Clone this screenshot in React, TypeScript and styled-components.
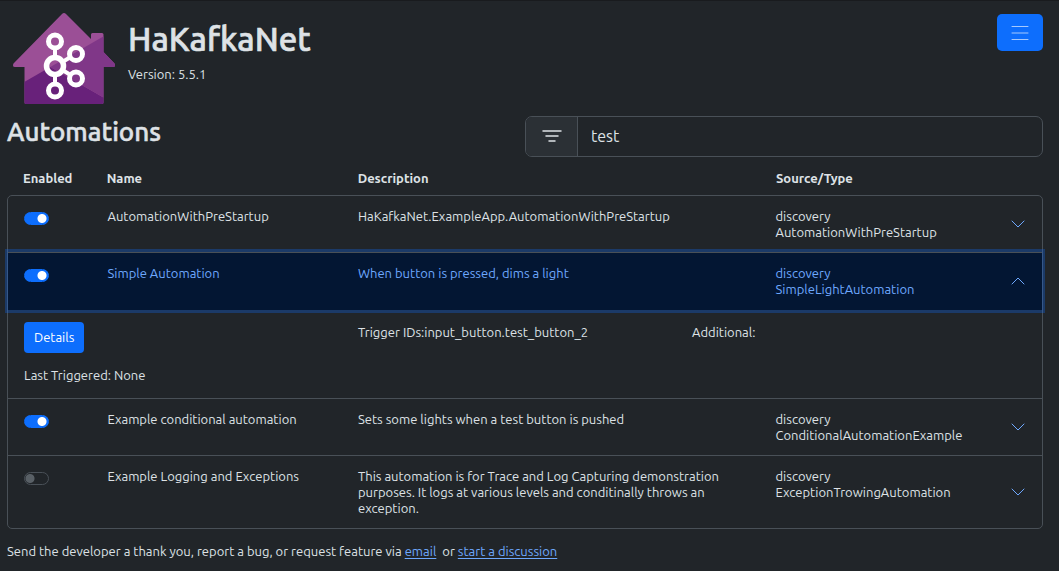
import { useState } from "react";
import styled, { createGlobalStyle, css } from "styled-components";

const GlobalStyle = createGlobalStyle`
  *, *::before, *::after { box-sizing: border-box; }
  body {
    margin: 0;
    background: #212529;
    color: #dee2e6;
    font-family: Ubuntu, "Noto Sans", sans-serif;
    font-size: 13px;
    line-height: 16px;
  }
  button, input { font: inherit; }
`;

const Page = styled.div`
  padding: 11px 16px 10px 7px;
  border-top: 1px solid #191b1e;
`;

const Header = styled.header`
  display: flex;
  align-items: flex-start;
  padding-left: 6px;
`;

const Logo = styled.svg`
  display: block;
  width: 102px;
  height: 92px;
  flex: none;
`;

const Brand = styled.div`
  flex: 1;
  padding: 8px 0 0 13px;
`;

const heading = css`
  font-family: Ubuntu, "Noto Sans", sans-serif;
  font-weight: 500;
  -webkit-text-stroke: 0.02em currentColor;
`;

const Title = styled.h1`
  ${heading}
  margin: 0 0 8px;
  font-size: 33px;
  line-height: 38px;
`;

const Version = styled.p`
  margin: 0;
`;

const MenuButton = styled.button`
  display: flex;
  align-items: center;
  justify-content: center;
  width: 46px;
  height: 37px;
  margin-top: 2px;
  padding: 0;
  border: 0;
  border-radius: 5px;
  background: #0d6efd;
  color: #a6c9fe;
  cursor: pointer;
`;

const Toolbar = styled.div`
  display: grid;
  grid-template-columns: 1fr 1fr;
  margin-top: 12px;
`;

const SectionTitle = styled.h2`
  ${heading}
  margin: 0;
  font-size: 26px;
  line-height: 32px;
`;

const SearchGroup = styled.div`
  display: flex;
  height: 41px;
  border: 1px solid #495057;
  border-radius: 7px;
  overflow: hidden;
`;

const SearchLabel = styled.label`
  display: flex;
  align-items: center;
  justify-content: center;
  width: 52px;
  padding-bottom: 1px;
  border-right: 1px solid #495057;
  background: #2b3035;
  color: #dee2e6;
`;

const SearchInput = styled.input`
  flex: 1;
  min-width: 0;
  padding: 0 13px 2px;
  border: 0;
  outline: 0;
  background: transparent;
  color: #dee2e6;
  font-size: 16px;
`;

const Table = styled.table`
  display: block;
  margin-top: 13px;
`;

const Head = styled.thead`
  display: block;
  padding: 0 16px;
`;

const Body = styled.tbody`
  display: block;
  margin-top: 9px;
  border: 1px solid #495057;
  border-radius: 5px;
`;

const columns = css`
  display: grid;
  grid-template-columns: 1fr 3fr 5fr 3fr;
`;

const HeadRow = styled.tr`
  ${columns}
`;

const HeadCell = styled.th`
  padding: 0 20px 0 0;
  text-align: left;
  font-weight: 700;
`;

const Row = styled.tr<{ $open: boolean }>`
  ${columns}
  padding: 12px 16px;

  tr + & {
    border-top: 1px solid #495057;
  }

  ${({ $open }) =>
    $open &&
    css`
      position: relative;
      padding-bottom: 13px;
      background: #031633;
      color: #6ea8fe;
      box-shadow: 0 0 0 3px rgba(13, 110, 253, 0.3);
    `}
`;

const Cell = styled.td`
  padding: 0 20px 0 0;
`;

const SourceCell = styled.td`
  display: flex;
  justify-content: space-between;
  padding: 0 1px 0 0;
`;

const Line = styled.div``;

const Switch = styled.input`
  appearance: none;
  display: block;
  width: 25px;
  height: 13px;
  margin: 4px 0 0;
  border: 1px solid #495057;
  border-radius: 7px;
  background: radial-gradient(circle at 5px 50%, #596066 4px, transparent 5px);

  &:checked {
    border-color: #0d6efd;
    background: radial-gradient(circle at 17px 50%, #fff 4px, #0d6efd 5px);
  }
`;

const Toggle = styled.button`
  align-self: center;
  display: flex;
  padding: 0;
  border: 0;
  background: transparent;
  color: #6ea8fe;
  cursor: pointer;
`;

const DetailRow = styled.tr`
  display: block;
`;

const DetailCell = styled.td`
  display: grid;
  grid-template-columns: repeat(3, 1fr);
  row-gap: 14px;
  padding: 12px 16px 15px;
`;

const DetailText = styled.div`
  padding-top: 2px;
`;

const DetailsButton = styled.button`
  justify-self: start;
  height: 31px;
  padding: 0 10px 2px;
  border: 0;
  border-radius: 4px;
  background: #0d6efd;
  color: #fff;
  cursor: pointer;
`;

const Footer = styled.footer`
  margin-top: 14px;
`;

const Link = styled.a`
  color: #6ea8fe;
  text-underline-offset: 2px;
`;

const Chevron = ({ up }: { up: boolean }) => (
  <svg width="14" height="8" viewBox="0 0 14 8" fill="none" stroke="currentColor" strokeLinecap="round" strokeLinejoin="round">
    <path d={up ? "M1 7L7 1L13 7" : "M1 1L7 7L13 1"} />
  </svg>
);

const automations = [
  {
    name: "AutomationWithPreStartup",
    description: "HaKafkaNet.ExampleApp.AutomationWithPreStartup",
    source: "discovery",
    type: "AutomationWithPreStartup",
    enabled: true,
    trigger: "",
  },
  {
    name: "Simple Automation",
    description: "When button is pressed, dims a light",
    source: "discovery",
    type: "SimpleLightAutomation",
    enabled: true,
    trigger: "input_button.test_button_2",
  },
  {
    name: "Example conditional automation",
    description: "Sets some lights when a test button is pushed",
    source: "discovery",
    type: "ConditionalAutomationExample",
    enabled: true,
    trigger: "",
  },
  {
    name: "Example Logging and Exceptions",
    description:
      "This automation is for Trace and Log Capturing demonstration purposes. It logs at various levels and conditinally throws an exception.",
    source: "discovery",
    type: "ExceptionTrowingAutomation",
    enabled: false,
    trigger: "",
  },
];

type Automation = (typeof automations)[number];

function AutomationRows({ item, open, onToggle }: { item: Automation; open: boolean; onToggle: () => void }) {
  return (
    <>
      <Row $open={open}>
        <Cell>
          <Switch type="checkbox" role="switch" defaultChecked={item.enabled} aria-label={`Enable ${item.name}`} />
        </Cell>
        <Cell>{item.name}</Cell>
        <Cell>{item.description}</Cell>
        <SourceCell>
          <div>
            <Line>{item.source}</Line>
            <Line>{item.type}</Line>
          </div>
          <Toggle type="button" aria-expanded={open} aria-label={`Toggle ${item.name}`} onClick={onToggle}>
            <Chevron up={open} />
          </Toggle>
        </SourceCell>
      </Row>
      {open && (
        <DetailRow>
          <DetailCell colSpan={4}>
            <DetailsButton type="button">Details</DetailsButton>
            <DetailText>Trigger IDs:{item.trigger}</DetailText>
            <DetailText>Additional:</DetailText>
            <div>Last Triggered: None</div>
          </DetailCell>
        </DetailRow>
      )}
    </>
  );
}

export default function App() {
  const [openName, setOpenName] = useState("Simple Automation");

  return (
    <Page>
      <GlobalStyle />
      <Header>
        <Logo viewBox="13 12 102 92" aria-hidden="true">
          <defs>
            <clipPath id="house">
              <path d="M62 14Q64 12 66 14L91 39V34.500Q91 33 92.500 33H102Q103.500 33 103.500 34.500V52L114.500 63.500Q116 67 113 67H103.500V102.500Q103.500 104 102 104H26Q24.500 104 24.500 102.500V67H15Q12 67 13.500 63.500Z" />
            </clipPath>
          </defs>
          <g clipPath="url(#house)">
            <rect x="13" y="12" width="103" height="93" fill="#9b4f96" />
            <path d="M12 89L50.300 67L120 107V108H12Z" fill="#68217a" />
            <path d="M50.300 67L120 27V107Z" fill="#803788" />
          </g>
          <g fill="none" stroke="#fff">
            <path d="M55 50V56M55 76V82M64 61L69 58M64 71L69 74" strokeWidth="4" />
            <circle cx="55" cy="66" r="8.500" strokeWidth="5.500" />
            <g strokeWidth="5">
              <circle cx="55" cy="41.500" r="6.500" />
              <circle cx="55" cy="90.500" r="6.500" />
              <circle cx="76" cy="54" r="6.500" />
              <circle cx="76" cy="78.500" r="6.500" />
            </g>
          </g>
        </Logo>
        <Brand>
          <Title>HaKafkaNet</Title>
          <Version>Version: 5.5.1</Version>
        </Brand>
        <MenuButton type="button" aria-label="Menu">
          <svg width="18" height="16" viewBox="0 0 18 16" stroke="currentColor" strokeLinecap="round">
            <path d="M1 1.500H17M1 8H17M1 14.500H17" />
          </svg>
        </MenuButton>
      </Header>
      <main>
        <Toolbar>
          <SectionTitle>Automations</SectionTitle>
          <SearchGroup>
            <SearchLabel htmlFor="filter" aria-label="Filter automations">
              <svg width="20" height="14" viewBox="0 0 20 14" stroke="currentColor" strokeWidth="1.500" strokeLinecap="round">
                <path d="M1 2H19M4 7H16M7 12H13" />
              </svg>
            </SearchLabel>
            <SearchInput id="filter" type="text" defaultValue="test" />
          </SearchGroup>
        </Toolbar>
        <Table>
          <Head>
            <HeadRow>
              <HeadCell>Enabled</HeadCell>
              <HeadCell>Name</HeadCell>
              <HeadCell>Description</HeadCell>
              <HeadCell>Source/Type</HeadCell>
            </HeadRow>
          </Head>
          <Body>
            {automations.map((item) => (
              <AutomationRows
                key={item.name}
                item={item}
                open={item.name === openName}
                onToggle={() => setOpenName(item.name === openName ? "" : item.name)}
              />
            ))}
          </Body>
        </Table>
      </main>
      <Footer>
        Send the developer a thank you, report a bug, or request feature via <Link href="#email">email</Link>
        {" \u00a0"}or <Link href="#discussion">start a discussion</Link>
      </Footer>
    </Page>
  );
}
